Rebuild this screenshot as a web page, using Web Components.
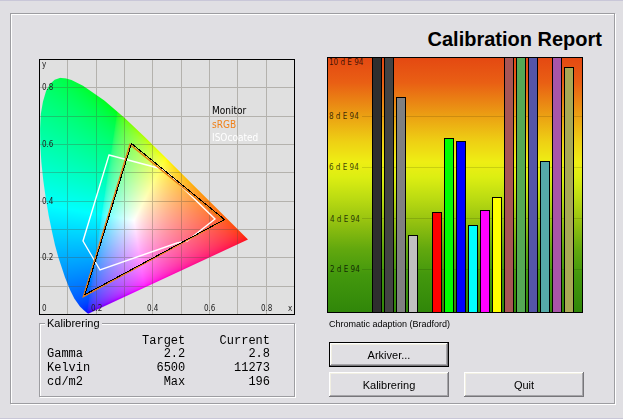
<!DOCTYPE html>
<html lang="en">
<head>
<meta charset="utf-8">
<title>Calibration Report</title>
<style>
  body { margin: 0; background: #e0dfe3; color: #000; font: 11px/12px "Liberation Sans", sans-serif; }
</style>
</head>
<body>
<calibration-report></calibration-report>

<template id="report-template">
  <style>
    :host { display: flex; box-sizing: border-box; min-height: 100vh; padding: 12px 8px 14px 10px; border: solid #c9c7d8; border-width: 1px 0; }
    main { flex: 1; display: grid; grid-template-columns: 1fr 1fr; column-gap: 32px; align-content: start; padding: 13px 31px 6px 28px; border: 1px solid #9d9da1; box-shadow: 1px 1px 0 #fff, inset 1px 1px 0 #fff; }
    h1 { grid-column: 1 / -1; justify-self: end; margin: 0 -19px 6px 0; font-size: 20px; line-height: 24px; white-space: nowrap; }
    .left { margin-top: 2px; }
    .left, .right { min-width: 0; }
    p { margin: 5px 0 12px 2px; font-size: 9px; white-space: nowrap; }
    .actions { display: grid; grid-template-columns: 1fr 1fr; gap: 5px 15px; margin: 0 -1px 0 2px; }
    .first { grid-column: 1; }
    .next { grid-row: 2; }
  </style>
  <main>
    <h1>Calibration Report</h1>
    <section class="left">
      <gamut-chart></gamut-chart>
      <calibration-values></calibration-values>
    </section>
    <section class="right">
      <delta-chart></delta-chart>
      <p>Chromatic adaption (Bradford)</p>
      <div class="actions">
        <push-button class="first" primary>Arkiver...</push-button>
        <push-button class="next">Kalibrering</push-button>
        <push-button class="next">Quit</push-button>
      </div>
    </section>
  </main>
</template>

<template id="gamut-template">
  <style>
    :host { display: grid; aspect-ratio: 1; background: #e0e0e0; font-family: "DejaVu Sans Condensed", "DejaVu Sans", sans-serif; }
    canvas, svg { grid-area: 1 / 1; display: block; width: 100%; height: 100%; }
    .grid { stroke: #504838; stroke-opacity: .3; shape-rendering: crispEdges; }
    .axis { font-size: 8px; fill: #222; }
    .legend { font-size: 10px; }
  </style>
  <canvas width="512" height="512"></canvas>
  <svg viewBox="0 0 256 256" role="img" aria-label="Chromaticity diagram">
    <path class="grid" fill="none" d="M28.500 1V255M57.500 1V255M85.500 1V255M113.500 1V255M142.500 1V255M170.500 1V255M198.500 1V255M227.500 1V255M1 28.500H255M1 57.500H255M1 85.500H255M1 113.500H255M1 142.500H255M1 170.500H255M1 198.500H255M1 227.500H255"/>
    <g fill="none">
      <path stroke="#fff" stroke-width="1.400" d="M70 96L123 110L129 114L143 128L176 160L148 182L138 184L61 211L44 182Z"/>
      <path stroke="#e87c14" stroke-width="1.500" d="M91 85.500L184.500 161.500L44.500 237.500Z"/>
      <path stroke="#000" shape-rendering="crispEdges" d="M92.500 84.500L185.500 160.500L46 235.500Z"/>
    </g>
    <g class="axis">
      <text x="3" y="8">y</text>
      <text x="3" y="31">0.8</text><text x="3" y="88">0.6</text>
      <text x="3" y="145">0.4</text><text x="3" y="201">0.2</text>
      <text x="3" y="252">0</text><text x="52" y="252">0.2</text>
      <text x="108" y="252">0.4</text><text x="165" y="252">0.6</text>
      <text x="222" y="252">0.8</text><text x="249" y="252">x</text>
    </g>
    <g class="legend">
      <text x="173" y="55">Monitor</text>
      <text x="173" y="69" fill="#f08018">sRGB</text>
      <text x="173" y="82" fill="#fff">ISOcoated</text>
    </g>
    <rect x=".5" y=".5" width="255" height="255" fill="none" stroke="#000"/>
  </svg>
</template>

<template id="delta-template">
  <style>
    :host { display: block; font-family: "DejaVu Sans Condensed", "DejaVu Sans", sans-serif; }
    svg { display: block; width: 100%; }
    text { font-size: 8px; fill: #000; fill-opacity: .75; }
    rect, path { shape-rendering: crispEdges; }
  </style>
  <svg viewBox="0 0 256 256" role="img" aria-label="Delta E 94 per colour">
    <defs>
      <linearGradient id="scale" x1="0" y1="0" x2="0" y2="1">
        <stop offset="0" stop-color="#e44812"/>
        <stop offset=".1" stop-color="#e95f14"/>
        <stop offset=".23" stop-color="#eba013"/>
        <stop offset=".33" stop-color="#eed014"/>
        <stop offset=".41" stop-color="#eeee14"/>
        <stop offset=".47" stop-color="#dcee12"/>
        <stop offset=".55" stop-color="#bcdc12"/>
        <stop offset=".65" stop-color="#92c010"/>
        <stop offset=".75" stop-color="#62a80e"/>
        <stop offset=".85" stop-color="#43980d"/>
        <stop offset="1" stop-color="#308609"/>
      </linearGradient>
    </defs>
    <rect width="256" height="256" fill="url(#scale)"/>
    <path d="M35 59.500H255M35 110.500H255M35 161.500H255M35 212.500H255" stroke="#000" stroke-opacity=".13"/>
    <g id="bars" stroke="#000"></g>
    <text x="2" y="8">10 d E 94</text>
    <text x="2" y="62">8 d E 94</text>
    <text x="2" y="113">6 d E 94</text>
    <text x="3" y="165">4 d E 94</text>
    <text x="3" y="215">2 d E 94</text>
    <rect x=".5" y=".5" width="255" height="255" fill="none" stroke="#000"/>
  </svg>
</template>

<template id="values-template">
  <style>
    :host { display: block; margin-top: 2px; }
    fieldset { margin: 0; min-width: 0; padding: 6px 24px 7px 7px; border: 1px solid #9d9da1; box-shadow: 1px 1px 0 #fff, inset 1px 1px 0 #fff; }
    legend { margin-left: -2px; padding: 0 2px; background: #e0dfe3; }
    table { width: 100%; border-collapse: collapse; table-layout: fixed; font: 12px/14px "Liberation Mono", monospace; }
    th, td { padding: 0; font-weight: normal; text-align: right; }
    thead { line-height: 12px; }
    tbody th { text-align: left; }
  </style>
  <fieldset>
    <legend>Kalibrering</legend>
    <table>
      <colgroup><col style="width:25%"><col style="width:37%"><col style="width:38%"></colgroup>
      <thead><tr><td></td><th scope="col">Target</th><th scope="col">Current</th></tr></thead>
      <tbody>
        <tr><th scope="row">Gamma</th><td>2.2</td><td>2.8</td></tr>
        <tr><th scope="row">Kelvin</th><td>6500</td><td>11273</td></tr>
        <tr><th scope="row">cd/m2</th><td>Max</td><td>196</td></tr>
      </tbody>
    </table>
  </fieldset>
</template>

<template id="button-template">
  <style>
    :host { display: block; }
    button { display: block; box-sizing: border-box; width: 100%; height: 25px; padding: 0; border: 0; background: #e0dfe3; color: #000; font: inherit; box-shadow: inset -1px -1px #77767a, inset 1px 1px #fff, inset -2px -2px #a6a5a9, inset 2px 2px #f1efe2; }
    :host([primary]) button { border: 1px solid #000; }
  </style>
  <button type="button"><slot></slot></button>
</template>

<script>
  const SVG = "http://www.w3.org/2000/svg";

  class TemplateElement extends HTMLElement {
    constructor() {
      super();
      const source = document.getElementById(this.constructor.template);
      this.attachShadow({ mode: "open" }).append(source.content.cloneNode(true));
    }
  }

  /* CIE 1931 spectral locus as x,y pairs */
  const LOCUS = [
    [.1741, .0050], [.1714, .0051], [.1644, .0109], [.1566, .0177], [.1440, .0297],
    [.1241, .0578], [.1096, .0868], [.0913, .1327], [.0687, .2007], [.0560, .2470],
    [.0454, .2950], [.0340, .3500], [.0235, .4127], [.0148, .4750], [.0082, .5384],
    [.0045, .6000], [.0039, .6548], [.0065, .7070], [.0139, .7502], [.0250, .7880],
    [.0389, .8120], [.0550, .8270], [.0743, .8338], [.0940, .8320], [.1142, .8262],
    [.1547, .8059], [.2296, .7543], [.3016, .6923], [.3731, .6245], [.4441, .5547],
    [.5125, .4866], [.5752, .4242], [.6270, .3725], [.6915, .3083], [.7347, .2653]
  ];

  class GamutChart extends TemplateElement {
    static template = "gamut-template";

    /* Fills the locus with the brightest CIE RGB colour of each chromaticity */
    connectedCallback() {
      const canvas = this.shadowRoot.querySelector("canvas");
      const size = canvas.width;
      const unit = size / .9;
      const context = canvas.getContext("2d");
      const image = context.createImageData(size, size);
      for (let row = 0; row < size; row++) {
        for (let column = 0; column < size; column++) {
          const x = column / unit, y = (size - row) / unit, z = 1 - x - y;
          const rgb = [
            2.3707 * x - .9001 * y - .4706 * z,
            -.5139 * x + 1.4253 * y + .0886 * z,
            .0053 * x - .0147 * y + 1.0094 * z
          ];
          const peak = Math.max(...rgb);
          const at = 4 * (row * size + column);
          rgb.forEach((v, i) => image.data[at + i] = 255 * Math.max(0, v / peak) ** (1 / 2.2));
          image.data[at + 3] = 255;
        }
      }
      context.putImageData(image, 0, 0);
      context.globalCompositeOperation = "destination-in";
      context.beginPath();
      LOCUS.forEach(([x, y]) => context.lineTo(x * unit, size - y * unit));
      context.closePath();
      context.fill();
    }
  }

  /* Fill colour and top edge of each bar; null leaves a gap */
  const BARS = [
    ["#2e2e2e", 0], ["#434343", 0], ["#808080", 40], ["#c0c0c0", 178], null,
    ["#ff0000", 155], ["#00ff00", 81], ["#0000ff", 84], ["#00ffff", 168],
    ["#ff00ff", 153], ["#ffff00", 140], ["#a85555", 0], ["#55a855", 0],
    ["#5555a8", 0], ["#55a8a8", 104], ["#a855a8", 0], ["#a8a855", 10]
  ];

  class DeltaChart extends TemplateElement {
    static template = "delta-template";

    connectedCallback() {
      const group = this.shadowRoot.getElementById("bars");
      BARS.forEach((bar, i) => {
        if (!bar) return;
        const rect = document.createElementNS(SVG, "rect");
        const box = { x: 45.5 + 12 * i, y: bar[1] + .5, width: 9, height: 255 - bar[1], fill: bar[0] };
        for (const [name, value] of Object.entries(box)) rect.setAttribute(name, value);
        group.append(rect);
      });
    }
  }

  class CalibrationValues extends TemplateElement { static template = "values-template"; }
  class PushButton extends TemplateElement { static template = "button-template"; }
  class CalibrationReport extends TemplateElement { static template = "report-template"; }

  customElements.define("gamut-chart", GamutChart);
  customElements.define("delta-chart", DeltaChart);
  customElements.define("calibration-values", CalibrationValues);
  customElements.define("push-button", PushButton);
  customElements.define("calibration-report", CalibrationReport);
</script>
</body>
</html>
